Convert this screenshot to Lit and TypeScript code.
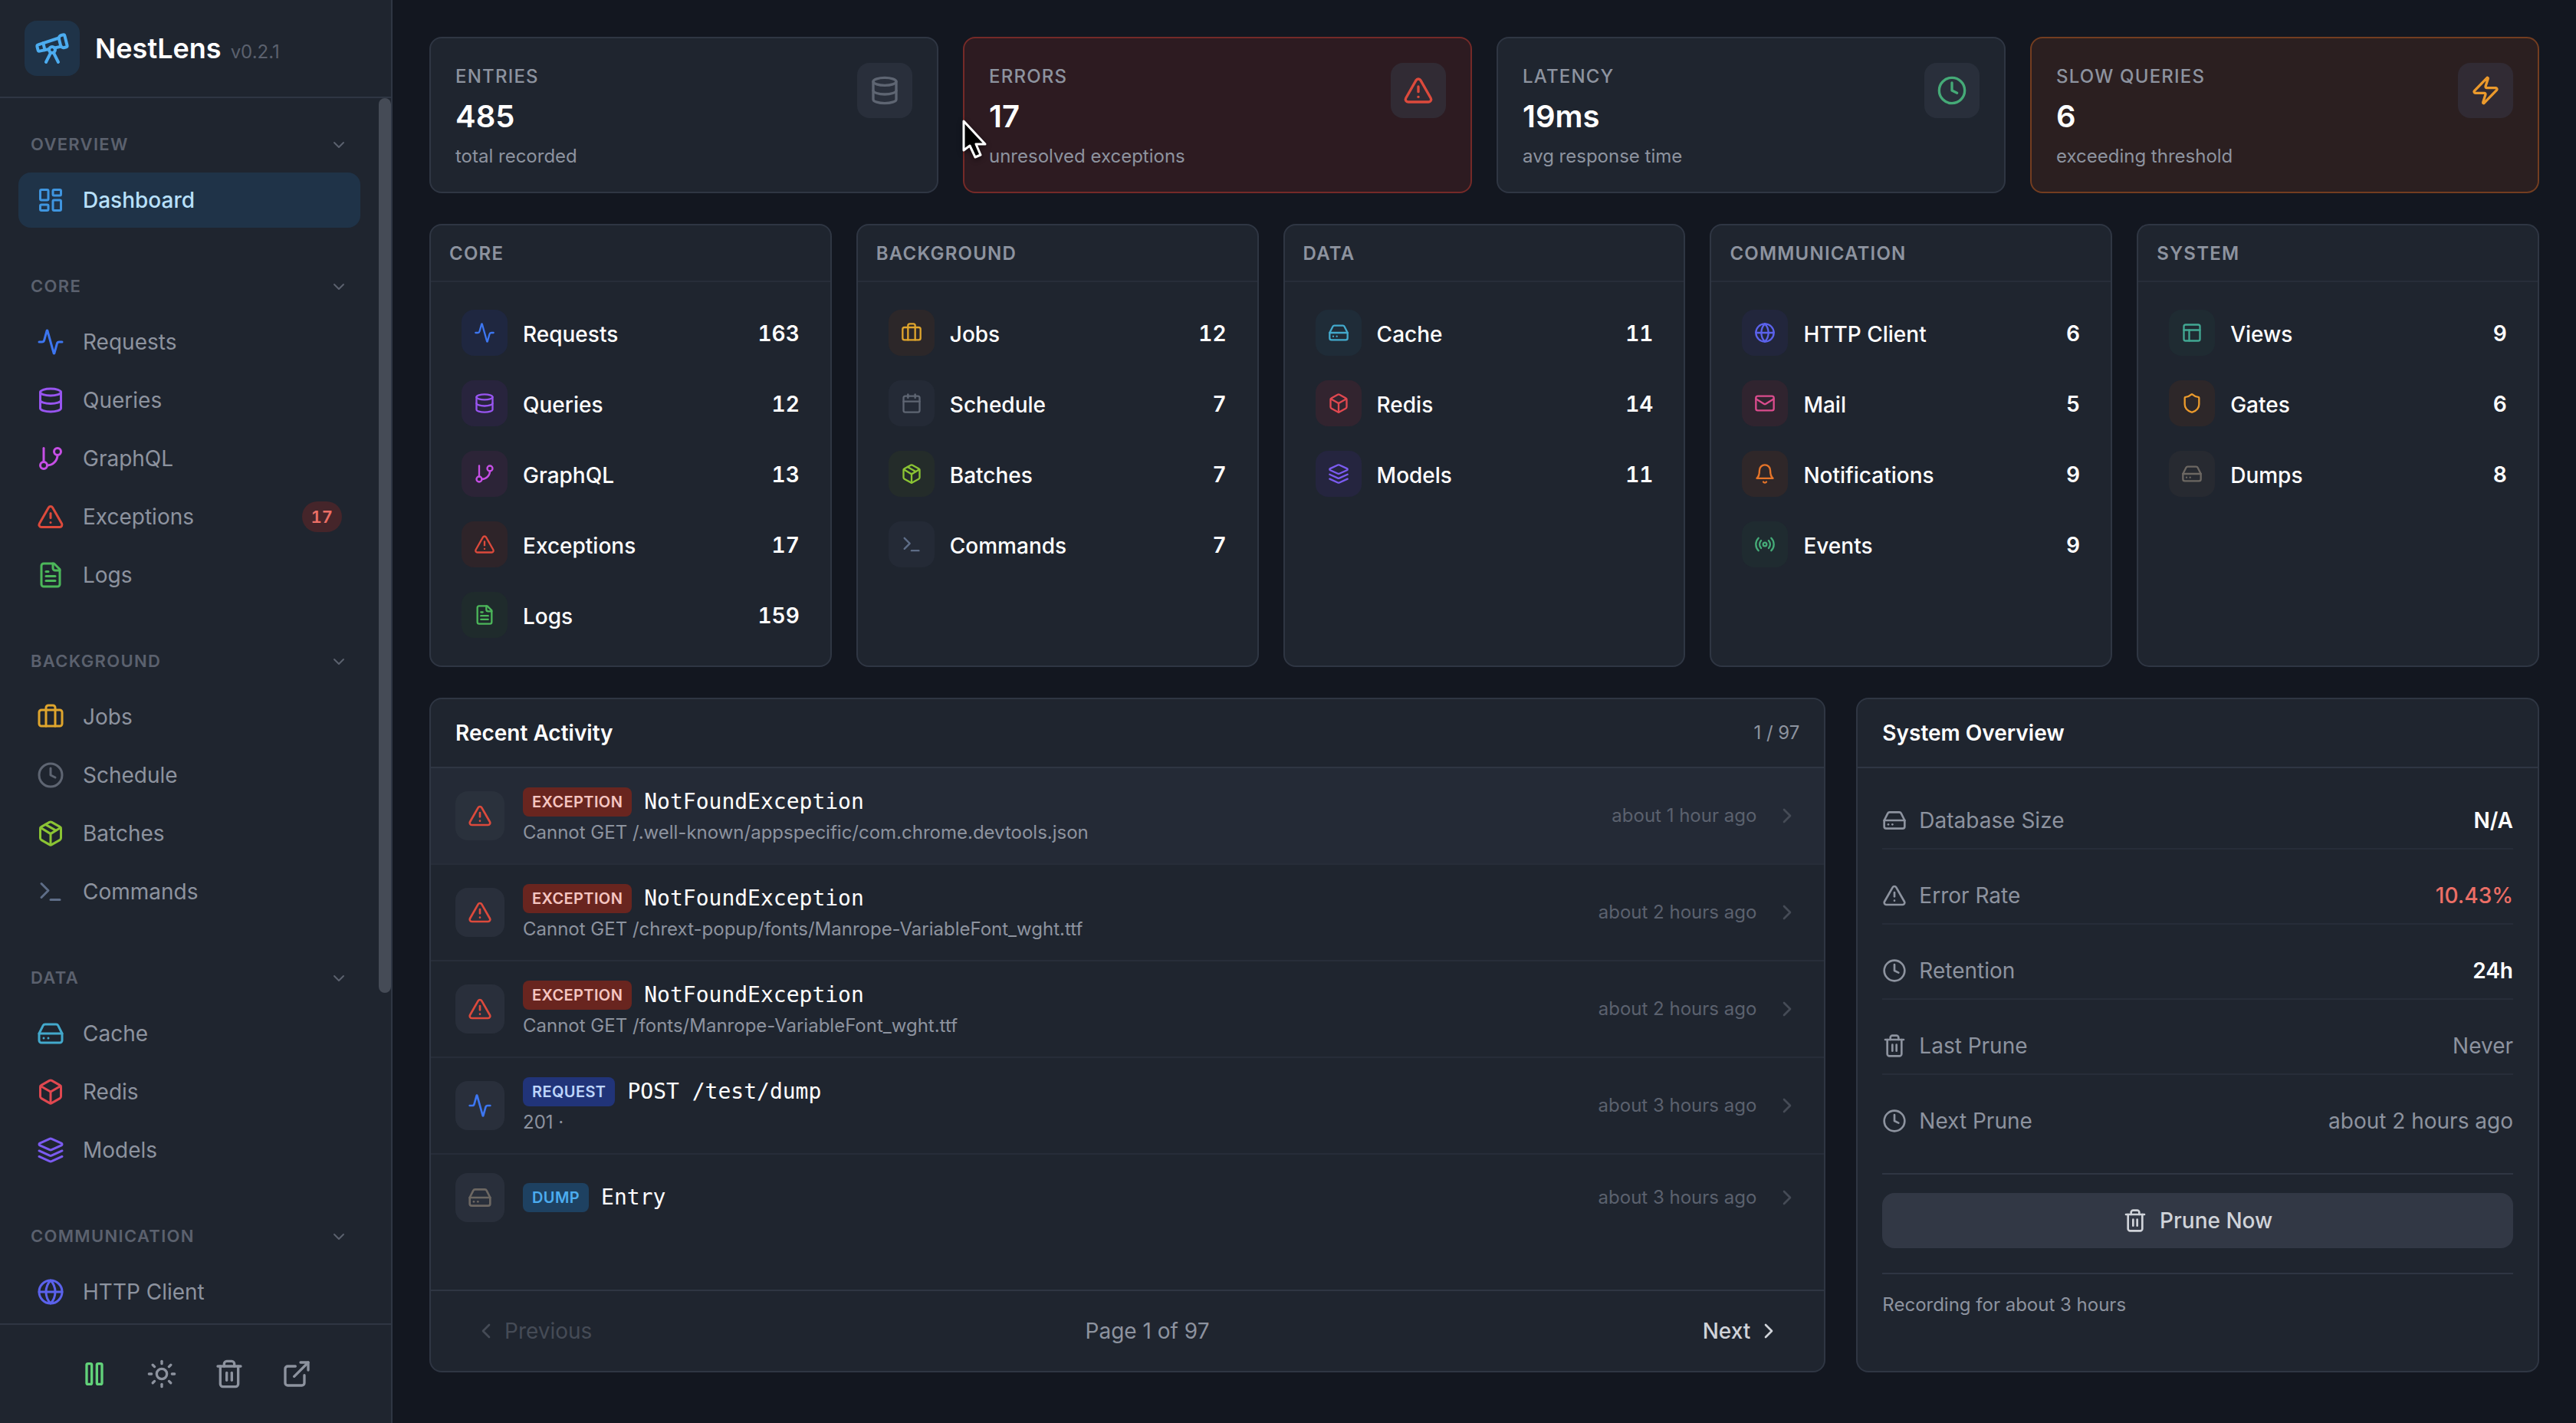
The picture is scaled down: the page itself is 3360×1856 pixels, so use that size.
import { LitElement, html, svg, css, nothing } from "lit";
import { customElement, property, state } from "lit/decorators.js";
import { classMap } from "lit/directives/class-map.js";

const GLYPHS = {
  telescope: svg`<path d="m10.065 12.493-6.18 1.318a.934.934 0 0 1-1.108-.702l-.537-2.15a1.07 1.07 0 0 1 .691-1.265l13.504-4.44"/><path d="m13.56 11.747 4.332-.924"/><path d="m16 21-3.105-6.21"/><path d="M16.485 5.94a2 2 0 0 1 1.455-2.425l1.09-.272a1 1 0 0 1 1.212.727l1.515 6.06a1 1 0 0 1-.727 1.213l-1.09.272a2 2 0 0 1-2.425-1.455z"/><path d="m6.158 8.633 1.114 4.456"/><path d="m8 21 3.105-6.21"/><circle cx="12" cy="13" r="2"/>`,
  dashboard: svg`<rect width="7" height="9" x="3" y="3" rx="1"/><rect width="7" height="5" x="14" y="3" rx="1"/><rect width="7" height="9" x="14" y="12" rx="1"/><rect width="7" height="5" x="3" y="16" rx="1"/>`,
  activity: svg`<path d="M22 12h-2.48a2 2 0 0 0-1.93 1.46l-2.35 8.36a.25.25 0 0 1-.48 0L9.24 2.18a.25.25 0 0 0-.48 0l-2.35 8.36A2 2 0 0 1 4.49 12H2"/>`,
  database: svg`<ellipse cx="12" cy="5" rx="9" ry="3"/><path d="M3 5V19A9 3 0 0 0 21 19V5"/><path d="M3 12A9 3 0 0 0 21 12"/>`,
  branch: svg`<line x1="6" x2="6" y1="3" y2="15"/><circle cx="18" cy="6" r="3"/><circle cx="6" cy="18" r="3"/><path d="M18 9a9 9 0 0 1-9 9"/>`,
  alert: svg`<path d="m21.73 18-8-14a2 2 0 0 0-3.48 0l-8 14A2 2 0 0 0 4 21h16a2 2 0 0 0 1.73-3"/><path d="M12 9v4"/><path d="M12 17h.01"/>`,
  file: svg`<path d="M15 2H6a2 2 0 0 0-2 2v16a2 2 0 0 0 2 2h12a2 2 0 0 0 2-2V7Z"/><path d="M14 2v4a2 2 0 0 0 2 2h4"/><path d="M10 9H8"/><path d="M16 13H8"/><path d="M16 17H8"/>`,
  briefcase: svg`<path d="M16 20V4a2 2 0 0 0-2-2h-4a2 2 0 0 0-2 2v16"/><rect width="20" height="14" x="2" y="6" rx="2"/>`,
  clock: svg`<circle cx="12" cy="12" r="10"/><polyline points="12 6 12 12 16 14"/>`,
  package: svg`<path d="M11 21.73a2 2 0 0 0 2 0l7-4A2 2 0 0 0 21 16V8a2 2 0 0 0-1-1.73l-7-4a2 2 0 0 0-2 0l-7 4A2 2 0 0 0 3 8v8a2 2 0 0 0 1 1.73z"/><path d="M12 22V12"/><path d="m3.3 7 7.703 4.734a2 2 0 0 0 1.994 0L20.7 7"/><path d="m7.5 4.27 9 5.15"/>`,
  terminal: svg`<polyline points="4 17 10 11 4 5"/><line x1="12" x2="20" y1="19" y2="19"/>`,
  drive: svg`<line x1="22" x2="2" y1="12" y2="12"/><path d="M5.45 5.11 2 12v6a2 2 0 0 0 2 2h16a2 2 0 0 0 2-2v-6l-3.45-6.89A2 2 0 0 0 16.76 4H7.24a2 2 0 0 0-1.79 1.11z"/><line x1="6" x2="6.01" y1="16" y2="16"/><line x1="10" x2="10.01" y1="16" y2="16"/>`,
  box: svg`<path d="M21 8a2 2 0 0 0-1-1.73l-7-4a2 2 0 0 0-2 0l-7 4A2 2 0 0 0 3 8v8a2 2 0 0 0 1 1.73l7 4a2 2 0 0 0 2 0l7-4A2 2 0 0 0 21 16Z"/><path d="m3.3 7 8.7 5 8.7-5"/><path d="M12 22V12"/>`,
  layers: svg`<path d="m12.83 2.18a2 2 0 0 0-1.66 0L2.6 6.08a1 1 0 0 0 0 1.83l8.58 3.91a2 2 0 0 0 1.66 0l8.58-3.9a1 1 0 0 0 0-1.83Z"/><path d="m22 17.65-9.17 4.16a2 2 0 0 1-1.66 0L2 17.65"/><path d="m22 12.65-9.17 4.16a2 2 0 0 1-1.66 0L2 12.65"/>`,
  globe: svg`<circle cx="12" cy="12" r="10"/><path d="M12 2a14.5 14.5 0 0 0 0 20 14.5 14.5 0 0 0 0-20"/><path d="M2 12h20"/>`,
  calendar: svg`<path d="M8 2v4"/><path d="M16 2v4"/><rect width="18" height="18" x="3" y="4" rx="2"/><path d="M3 10h18"/>`,
  mail: svg`<rect width="20" height="16" x="2" y="4" rx="2"/><path d="m22 7-8.97 5.7a1.94 1.94 0 0 1-2.06 0L2 7"/>`,
  bell: svg`<path d="M6 8a6 6 0 0 1 12 0c0 7 3 9 3 9H3s3-2 3-9"/><path d="M10.3 21a1.94 1.94 0 0 0 3.4 0"/>`,
  radio: svg`<path d="M4.9 19.1C1 15.2 1 8.8 4.9 4.9"/><path d="M7.8 16.2c-2.3-2.3-2.3-6.1 0-8.5"/><circle cx="12" cy="12" r="2"/><path d="M16.2 7.8c2.3 2.3 2.3 6.1 0 8.5"/><path d="M19.1 4.9C23 8.8 23 15.1 19.1 19"/>`,
  layout: svg`<rect width="18" height="18" x="3" y="3" rx="2"/><path d="M3 9h18"/><path d="M9 21V9"/>`,
  shield: svg`<path d="M20 13c0 5-3.5 7.5-7.66 8.95a1 1 0 0 1-.67-.01C7.5 20.5 4 18 4 13V6a1 1 0 0 1 1-1c2 0 4.5-1.2 6.24-2.72a1.17 1.17 0 0 1 1.52 0C14.51 3.81 17 5 19 5a1 1 0 0 1 1 1z"/>`,
  zap: svg`<path d="M4 14a1 1 0 0 1-.78-1.63l9.9-10.2a.5.5 0 0 1 .86.46l-1.92 6.02A1 1 0 0 0 13 10h7a1 1 0 0 1 .78 1.63l-9.9 10.2a.5.5 0 0 1-.86-.46l1.92-6.02A1 1 0 0 0 11 14z"/>`,
  trash: svg`<path d="M3 6h18"/><path d="M19 6v14c0 1-1 2-2 2H7c-1 0-2-1-2-2V6"/><path d="M8 6V4c0-1 1-2 2-2h4c1 0 2 1 2 2v2"/><line x1="10" x2="10" y1="11" y2="17"/><line x1="14" x2="14" y1="11" y2="17"/>`,
  external: svg`<path d="M15 3h6v6"/><path d="M10 14 21 3"/><path d="M18 13v6a2 2 0 0 1-2 2H5a2 2 0 0 1-2-2V8a2 2 0 0 1 2-2h6"/>`,
  pause: svg`<rect x="14" y="4" width="4" height="16" rx="1"/><rect x="6" y="4" width="4" height="16" rx="1"/>`,
  sun: svg`<circle cx="12" cy="12" r="4"/><path d="M12 2v2"/><path d="M12 20v2"/><path d="m4.93 4.93 1.41 1.41"/><path d="m17.66 17.66 1.41 1.41"/><path d="M2 12h2"/><path d="M20 12h2"/><path d="m6.34 17.66-1.41 1.41"/><path d="m19.07 4.93-1.41 1.41"/>`,
  down: svg`<path d="m6 9 6 6 6-6"/>`,
  left: svg`<path d="m15 18-6-6 6-6"/>`,
  right: svg`<path d="m9 18 6-6-6-6"/>`,
};
type Glyph = keyof typeof GLYPHS;

@customElement("nl-icon")
class NlIcon extends LitElement {
  @property() name: Glyph = "box";
  static styles = css`
    :host { display: block; flex: none; width: 32px; height: 32px; }
    .glyph { display: block; width: 100%; height: 100%; fill: none; stroke: currentColor; stroke-width: 2; stroke-linecap: round; stroke-linejoin: round; }
  `;
  render() {
    return html`<svg class="glyph" viewBox="0 0 24 24" aria-hidden="true">${GLYPHS[this.name]}</svg>`;
  }
}

const tones = css`
  .blue { --tone: #3d76f0; --tint: #1f2740; }
  .purple { --tone: #9855f0; --tint: #28243d; }
  .fuchsia { --tone: #c64fe5; --tint: #2c2437; }
  .red { --tone: #dc4a3c; --tint: #2e2429; }
  .green { --tone: #4cb75a; --tint: #1f2b2c; }
  .amber { --tone: #dfa52d; --tint: #2c2729; }
  .gray { --tone: #5e6572; --tint: #242a36; }
  .lime { --tone: #8bc434; --tint: #242c2a; }
  .slate { --tone: #5e6d87; --tint: #242a36; }
  .cyan { --tone: #43a9cc; --tint: #1f2c38; }
  .rose { --tone: #e04850; --tint: #32242f; }
  .violet { --tone: #7b5bf0; --tint: #25253f; }
  .indigo { --tone: #5b62ec; --tint: #22263c; }
  .pink { --tone: #da4c8d; --tint: #30242f; }
  .orange { --tone: #e57429; --tint: #2f2729; }
  .emerald { --tone: #45aa77; --tint: #1f2b30; }
  .teal { --tone: #42a893; --tint: #1f2b32; }
  .stone { --tone: #6c6762; --tint: #272a31; }
  .gold { --tone: #eb9a2c; --tint: #2d2729; }
`;

const base = css`
  *, *::before, *::after { box-sizing: border-box; }
  h1, h2, p, ul, dl, dd, dt { margin: 0; padding: 0; }
  ul { list-style: none; }
  a { color: inherit; text-decoration: none; }
  button { margin: 0; padding: 0; border: 0; background: none; color: inherit; font: inherit; cursor: pointer; }
`;

interface Item { label: string; icon: Glyph; tone: string; badge?: number; current?: boolean; }
interface Group { title: string; items: Item[]; }

const NAV: Group[] = [
  { title: "Overview", items: [{ label: "Dashboard", icon: "dashboard", tone: "sky", current: true }] },
  {
    title: "Core", items: [
      { label: "Requests", icon: "activity", tone: "blue" },
      { label: "Queries", icon: "database", tone: "purple" },
      { label: "GraphQL", icon: "branch", tone: "fuchsia" },
      { label: "Exceptions", icon: "alert", tone: "red", badge: 17 },
      { label: "Logs", icon: "file", tone: "green" },
    ],
  },
  {
    title: "Background", items: [
      { label: "Jobs", icon: "briefcase", tone: "amber" },
      { label: "Schedule", icon: "clock", tone: "gray" },
      { label: "Batches", icon: "package", tone: "lime" },
      { label: "Commands", icon: "terminal", tone: "slate" },
    ],
  },
  {
    title: "Data", items: [
      { label: "Cache", icon: "drive", tone: "cyan" },
      { label: "Redis", icon: "box", tone: "rose" },
      { label: "Models", icon: "layers", tone: "violet" },
    ],
  },
  { title: "Communication", items: [{ label: "HTTP Client", icon: "globe", tone: "indigo" }] },
];

@customElement("nl-sidebar")
class NlSidebar extends LitElement {
  @state() private closed = new Set<string>();

  static styles = [base, tones, css`
    :host { display: flex; flex-direction: column; height: 100%; background: #1f252f; border-right: 2px solid #2f3643; }
    .brand { display: flex; align-items: center; gap: 20px; flex: none; height: 128px; padding: 0 32px; border-bottom: 2px solid #2f3643; }
    .logo { display: grid; place-items: center; width: 72px; height: 72px; border-radius: 16px; background: #1f3348; color: #4cacef; }
    .logo nl-icon { width: 48px; height: 48px; }
    .wordmark { display: flex; align-items: baseline; gap: 12px; }
    .name { font-size: 36px; line-height: 44px; font-weight: 600; color: #fff; }
    .version { font-size: 24px; color: #5b616e; }
    .scroller { display: flex; flex: 1; min-height: 0; overflow: hidden; }
    .nav { display: flex; flex-direction: column; gap: 40px; flex: 1; min-width: 0; padding: 24px 24px 0; }
    .track { flex: none; width: 16px; }
    .thumb { height: 73%; border-radius: 8px; background: #454b56; }
    .toggle { display: flex; align-items: center; justify-content: space-between; width: 100%; padding: 20px 16px; font-size: 22px; line-height: 33px; font-weight: 600; letter-spacing: 0.06em; text-transform: uppercase; color: #5b616e; }
    .toggle nl-icon { width: 24px; height: 24px; }
    .list { display: flex; flex-direction: column; gap: 4px; }
    .link { display: flex; align-items: center; gap: 24px; height: 72px; padding: 0 24px; border-radius: 16px; font-size: 28px; color: #8d939f; }
    .link nl-icon { width: 36px; height: 36px; color: var(--tone); }
    .text { flex: 1; }
    .current { background: #1f3348; color: #b8e0fb; font-weight: 500; }
    .sky { --tone: #3f95df; }
    .badge { padding: 4px 12px; border-radius: 20px; background: #45252a; color: #ec6f66; font-size: 22px; line-height: 32px; font-weight: 600; font-variant-numeric: tabular-nums; }
    .tools { display: flex; align-items: center; justify-content: center; gap: 16px; flex: none; height: 130px; border-top: 2px solid #2f3643; color: #8d939f; }
    .tool { display: block; padding: 16px; }
    .tool nl-icon { width: 40px; height: 40px; }
    .live { color: #62d27a; }
  `];

  private flip(title: string) {
    const next = new Set(this.closed);
    if (!next.delete(title)) next.add(title);
    this.closed = next;
  }

  render() {
    return html`
      <header class="brand">
        <span class="logo"><nl-icon name="telescope"></nl-icon></span>
        <div class="wordmark"><span class="name">NestLens</span><span class="version">v0.2.1</span></div>
      </header>
      <div class="scroller">
        <nav class="nav" aria-label="Main">
          ${NAV.map((group) => html`
            <section>
              <button class="toggle" aria-expanded=${this.closed.has(group.title) ? "false" : "true"} @click=${() => this.flip(group.title)}>
                <span>${group.title}</span><nl-icon name="down"></nl-icon>
              </button>
              ${this.closed.has(group.title) ? nothing : html`
                <ul class="list">
                  ${group.items.map((item) => html`
                    <li><a href="#" class=${classMap({ link: true, current: !!item.current, [item.tone]: true })}>
                      <nl-icon name=${item.icon}></nl-icon><span class="text">${item.label}</span>
                      ${item.badge ? html`<span class="badge">${item.badge}</span>` : nothing}
                    </a></li>`)}
                </ul>`}
            </section>`)}
        </nav>
        <div class="track"><div class="thumb"></div></div>
      </div>
      <footer class="tools">
        <button class="tool live" aria-label="Pause recording"><nl-icon name="pause"></nl-icon></button>
        <button class="tool" aria-label="Toggle theme"><nl-icon name="sun"></nl-icon></button>
        <button class="tool" aria-label="Clear entries"><nl-icon name="trash"></nl-icon></button>
        <a class="tool" href="#" aria-label="Open in new window"><nl-icon name="external"></nl-icon></a>
      </footer>`;
  }
}

const STATS: { label: string; value: string; note: string; icon: Glyph; tone: string; kind?: string }[] = [
  { label: "Entries", value: "485", note: "total recorded", icon: "database", tone: "gray" },
  { label: "Errors", value: "17", note: "unresolved exceptions", icon: "alert", tone: "red", kind: "danger" },
  { label: "Latency", value: "19ms", note: "avg response time", icon: "clock", tone: "emerald" },
  { label: "Slow Queries", value: "6", note: "exceeding threshold", icon: "zap", tone: "gold", kind: "warning" },
];

const PANELS: { title: string; rows: [string, number, Glyph, string][] }[] = [
  {
    title: "Core", rows: [
      ["Requests", 163, "activity", "blue"], ["Queries", 12, "database", "purple"], ["GraphQL", 13, "branch", "fuchsia"],
      ["Exceptions", 17, "alert", "red"], ["Logs", 159, "file", "green"],
    ],
  },
  {
    title: "Background", rows: [
      ["Jobs", 12, "briefcase", "amber"], ["Schedule", 7, "calendar", "gray"], ["Batches", 7, "package", "lime"], ["Commands", 7, "terminal", "slate"],
    ],
  },
  { title: "Data", rows: [["Cache", 11, "drive", "cyan"], ["Redis", 14, "box", "rose"], ["Models", 11, "layers", "violet"]] },
  {
    title: "Communication", rows: [
      ["HTTP Client", 6, "globe", "indigo"], ["Mail", 5, "mail", "pink"], ["Notifications", 9, "bell", "orange"], ["Events", 9, "radio", "emerald"],
    ],
  },
  { title: "System", rows: [["Views", 9, "layout", "teal"], ["Gates", 6, "shield", "gold"], ["Dumps", 8, "drive", "stone"]] },
];

const ACTIVITY: { kind: string; title: string; note?: string; when: string; icon: Glyph; tone: string; active?: boolean }[] = [
  { kind: "Exception", title: "NotFoundException", note: "Cannot GET /.well-known/appspecific/com.chrome.devtools.json", when: "about 1 hour ago", icon: "alert", tone: "red", active: true },
  { kind: "Exception", title: "NotFoundException", note: "Cannot GET /chrext-popup/fonts/Manrope-VariableFont_wght.ttf", when: "about 2 hours ago", icon: "alert", tone: "red" },
  { kind: "Exception", title: "NotFoundException", note: "Cannot GET /fonts/Manrope-VariableFont_wght.ttf", when: "about 2 hours ago", icon: "alert", tone: "red" },
  { kind: "Request", title: "POST /test/dump", note: "201 ·", when: "about 3 hours ago", icon: "activity", tone: "blue" },
  { kind: "Dump", title: "Entry", when: "about 3 hours ago", icon: "drive", tone: "stone" },
];

const FACTS: { label: string; value: string; icon: Glyph; look: string }[] = [
  { label: "Database Size", value: "N/A", icon: "drive", look: "strong" },
  { label: "Error Rate", value: "10.43%", icon: "alert", look: "bad" },
  { label: "Retention", value: "24h", icon: "clock", look: "strong" },
  { label: "Last Prune", value: "Never", icon: "trash", look: "plain" },
  { label: "Next Prune", value: "about 2 hours ago", icon: "clock", look: "plain" },
];

@customElement("nl-dashboard")
class NlDashboard extends LitElement {
  static styles = [base, tones, css`
    :host { display: flex; flex-direction: column; gap: 40px; min-height: 100%; padding: 48px 48px 66px; font-size: 28px; line-height: 40px; }
    .card { border: 2px solid #2f3643; border-radius: 16px; background: #1f252f; overflow: hidden; }
    .tile { display: grid; place-items: center; flex: none; background: #292f3b; color: var(--tone); }

    .stats { display: grid; grid-template-columns: repeat(4, 1fr); gap: 32px; }
    .stat { display: flex; justify-content: space-between; align-items: flex-start; padding: 32px 32px 30px; }
    .danger { background: #2d1b21; border-color: #752a28; }
    .warning { background: #2b1f20; border-color: #733d20; }
    .danger .tile, .warning .tile { background: #312b34; }
    .copy { display: flex; flex-direction: column; gap: 8px; padding-top: 2px; }
    .label { font-size: 24px; line-height: 32px; font-weight: 500; letter-spacing: 0.05em; text-transform: uppercase; color: #8d939f; }
    .value { font-size: 40px; line-height: 56px; font-weight: 600; color: #fff; }
    .note { font-size: 24px; line-height: 32px; color: #8d939f; }
    .stat .tile { width: 72px; height: 72px; border-radius: 16px; }
    .stat nl-icon { width: 40px; height: 40px; }

    .panels { display: grid; grid-template-columns: repeat(5, 1fr); gap: 32px; }
    .panel-title { padding: 21px 24px 19px; border-bottom: 2px solid #272d39; font-size: 24px; line-height: 32px; font-weight: 600; letter-spacing: 0.05em; text-transform: uppercase; color: #8d939f; }
    .panel-list { display: flex; flex-direction: column; gap: 8px; padding: 24px; }
    .entry { display: flex; align-items: center; gap: 20px; padding: 12px 16px; color: #fff; }
    .entry .tile { width: 60px; height: 60px; border-radius: 16px; background: var(--tint); }
    .entry nl-icon { width: 28px; height: 28px; }
    .entry-label { flex: 1; padding-top: 4px; font-weight: 500; }
    .count { padding-top: 2px; font-weight: 600; font-variant-numeric: tabular-nums; }

    .bottom { display: grid; grid-template-columns: repeat(3, 1fr); gap: 40px; flex: 1; }
    .recent { display: flex; flex-direction: column; grid-column: span 2; }
    .head { display: flex; align-items: center; justify-content: space-between; padding: 24px 32px; border-bottom: 2px solid #2f3643; }
    .head-title { font-size: 28px; line-height: 40px; font-weight: 600; color: #fff; }
    .small { font-size: 24px; line-height: 32px; color: #8d939f; }
    .events { flex: 1; }
    .item + .item { border-top: 2px solid #272d39; }
    .event { display: flex; align-items: center; gap: 24px; padding: 24px 32px; }
    .active { background: #242a36; }
    .active .tile { background: #2a313c; }
    .event .tile { width: 64px; height: 64px; border-radius: 16px; }
    .body { display: flex; flex-direction: column; gap: 4px; flex: 1; min-width: 0; }
    .line { display: flex; align-items: center; gap: 16px; }
    .tag { padding: 4px 12px; border-radius: 8px; font-size: 20px; line-height: 30px; font-weight: 600; letter-spacing: 0.02em; text-transform: uppercase; }
    .tag-exception { background: #69251f; color: #f5c5c1; }
    .tag-request { background: #213479; color: #bdd5fb; }
    .tag-dump { background: #1e4161; color: #4cacef; }
    .title { font-family: "DejaVu Sans Mono", monospace; font-size: 28px; line-height: 40px; color: #fff; }
    .when { font-size: 24px; line-height: 32px; color: #5b616e; }
    .go { color: #454b56; }
    .pager { display: flex; align-items: center; justify-content: space-between; padding: 24px 32px; border-top: 2px solid #2f3643; color: #8d939f; }
    .page { display: flex; align-items: center; gap: 8px; padding: 8px 24px; color: #d0d3d9; font-weight: 500; }
    .page:disabled { color: #454b56; cursor: default; font-weight: 400; }

    .system { display: flex; flex-direction: column; }
    .facts { display: flex; flex-direction: column; gap: 24px; padding: 32px; }
    .fact { display: flex; align-items: center; justify-content: space-between; padding: 16px 0; border-bottom: 2px solid #272d39; color: #8d939f; }
    .fact:last-child { border-bottom: 0; }
    .key { display: flex; align-items: center; gap: 16px; }
    .strong { font-weight: 600; color: #fff; }
    .bad { font-weight: 500; color: #ec6f66; }
    .action { margin: 0 32px; padding: 24px 0 32px; border-top: 2px solid #2f3643; }
    .prune { display: flex; align-items: center; justify-content: center; gap: 16px; width: 100%; padding: 16px; border-radius: 16px; background: #323845; color: #d0d3d9; font-weight: 500; }
    .foot { margin: 0 32px; padding: 24px 0; border-top: 2px solid #2f3643; }
  `];

  render() {
    return html`
      <section class="stats" aria-label="Summary">
        ${STATS.map((s) => html`
          <article class=${classMap({ card: true, stat: true, [s.tone]: true, danger: s.kind === "danger", warning: s.kind === "warning" })}>
            <div class="copy"><p class="label">${s.label}</p><p class="value">${s.value}</p><p class="note">${s.note}</p></div>
            <span class="tile"><nl-icon name=${s.icon}></nl-icon></span>
          </article>`)}
      </section>

      <section class="panels" aria-label="Watchers">
        ${PANELS.map((p) => html`
          <article class="card">
            <h2 class="panel-title">${p.title}</h2>
            <ul class="panel-list">
              ${p.rows.map(([label, count, icon, tone]) => html`
                <li><a href="#" class="entry ${tone}">
                  <span class="tile"><nl-icon name=${icon}></nl-icon></span>
                  <span class="entry-label">${label}</span><span class="count">${count}</span>
                </a></li>`)}
            </ul>
          </article>`)}
      </section>

      <div class="bottom">
        <section class="card recent">
          <header class="head"><h2 class="head-title">Recent Activity</h2><span class="small">1 / 97</span></header>
          <ul class="events">
            ${ACTIVITY.map((e) => html`
              <li class="item"><a href="#" class=${classMap({ event: true, active: !!e.active, [e.tone]: true })}>
                <span class="tile"><nl-icon name=${e.icon}></nl-icon></span>
                <div class="body">
                  <div class="line"><span class="tag tag-${e.kind.toLowerCase()}">${e.kind}</span><span class="title">${e.title}</span></div>
                  ${e.note ? html`<p class="small">${e.note}</p>` : nothing}
                </div>
                <span class="when">${e.when}</span>
                <nl-icon class="go" name="right"></nl-icon>
              </a></li>`)}
          </ul>
          <footer class="pager">
            <button class="page" disabled><nl-icon name="left"></nl-icon>Previous</button>
            <span>Page 1 of 97</span>
            <button class="page">Next<nl-icon name="right"></nl-icon></button>
          </footer>
        </section>

        <section class="card system">
          <header class="head"><h2 class="head-title">System Overview</h2></header>
          <dl class="facts">
            ${FACTS.map((f) => html`
              <div class="fact"><dt class="key"><nl-icon name=${f.icon}></nl-icon>${f.label}</dt><dd class=${f.look}>${f.value}</dd></div>`)}
          </dl>
          <div class="action"><button class="prune"><nl-icon name="trash"></nl-icon>Prune Now</button></div>
          <p class="foot small">Recording for about 3 hours</p>
        </section>
      </div>`;
  }
}

@customElement("app-root")
class AppRoot extends LitElement {
  static styles = css`
    :host { display: grid; grid-template-columns: 512px minmax(0, 1fr); position: relative; min-height: 100vh; background: #131720; font-family: Inter, "Liberation Sans", sans-serif; }
    nl-sidebar { position: sticky; top: 0; box-sizing: border-box; height: 100vh; }
    nl-dashboard { box-sizing: border-box; }
    .pointer { position: absolute; left: 1252px; top: 152px; width: 36px; height: 60px; filter: drop-shadow(0 2px 3px rgba(0, 0, 0, 0.5)); pointer-events: none; }
  `;
  render() {
    return html`
      <nl-sidebar></nl-sidebar>
      <nl-dashboard></nl-dashboard>
      <svg class="pointer" viewBox="0 0 36 60" aria-hidden="true">
        <path d="M5 6V44L13 38L20 53L27 50L21 36H33Z" fill="#000" stroke="#fff" stroke-width="3" stroke-linejoin="round"/>
      </svg>`;
  }
}
